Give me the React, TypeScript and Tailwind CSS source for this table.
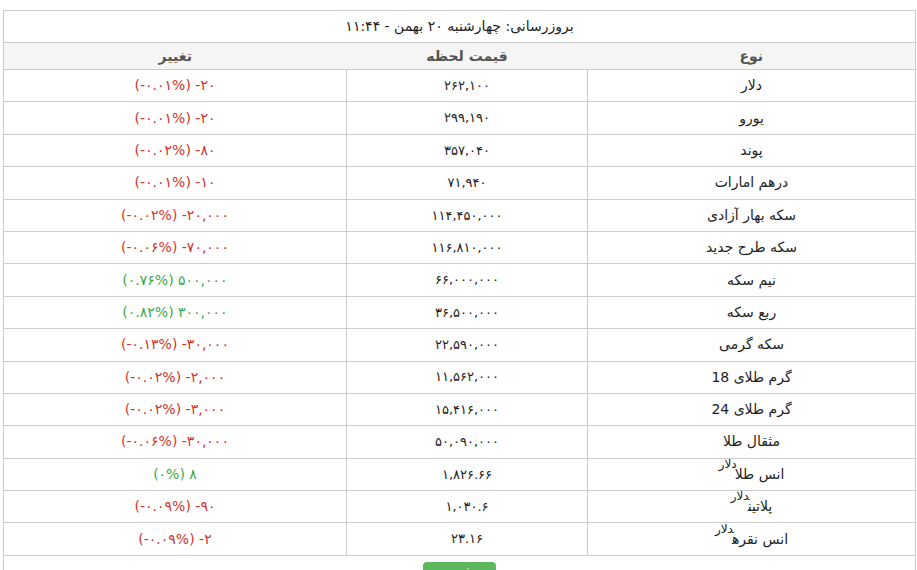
import React from 'react';

type Row = {
  name: string;
  unit?: string;
  price: string;
  amount: string;
  percent: string;
  up?: boolean;
};

const rows: Row[] = [
  { name: 'دلار', price: '۲۶۲,۱۰۰', amount: '-۲۰', percent: '(-۰.۰۱%)' },
  { name: 'یورو', price: '۲۹۹,۱۹۰', amount: '-۲۰', percent: '(-۰.۰۱%)' },
  { name: 'پوند', price: '۳۵۷,۰۴۰', amount: '-۸۰', percent: '(-۰.۰۲%)' },
  { name: 'درهم امارات', price: '۷۱,۹۴۰', amount: '-۱۰', percent: '(-۰.۰۱%)' },
  { name: 'سکه بهار آزادی', price: '۱۱۴,۴۵۰,۰۰۰', amount: '-۲۰,۰۰۰', percent: '(-۰.۰۲%)' },
  { name: 'سکه طرح جدید', price: '۱۱۶,۸۱۰,۰۰۰', amount: '-۷۰,۰۰۰', percent: '(-۰.۰۶%)' },
  { name: 'نیم سکه', price: '۶۶,۰۰۰,۰۰۰', amount: '۵۰۰,۰۰۰', percent: '(۰.۷۶%)', up: true },
  { name: 'ربع سکه', price: '۳۶,۵۰۰,۰۰۰', amount: '۳۰۰,۰۰۰', percent: '(۰.۸۲%)', up: true },
  { name: 'سکه گرمی', price: '۲۲,۵۹۰,۰۰۰', amount: '-۳۰,۰۰۰', percent: '(-۰.۱۳%)' },
  { name: 'گرم طلای 18', price: '۱۱,۵۶۲,۰۰۰', amount: '-۲,۰۰۰', percent: '(-۰.۰۲%)' },
  { name: 'گرم طلای 24', price: '۱۵,۴۱۶,۰۰۰', amount: '-۳,۰۰۰', percent: '(-۰.۰۲%)' },
  { name: 'مثقال طلا', price: '۵۰,۰۹۰,۰۰۰', amount: '-۳۰,۰۰۰', percent: '(-۰.۰۶%)' },
  { name: 'انس طلا', unit: 'دلار', price: '۱,۸۲۶.۶۶', amount: '۸', percent: '(۰%)', up: true },
  { name: 'پلاتین', unit: 'دلار', price: '۱,۰۳۰.۶', amount: '-۹۰', percent: '(-۰.۰۹%)' },
  { name: 'انس نقره', unit: 'دلار', price: '۲۳.۱۶', amount: '-۲', percent: '(-۰.۰۹%)' },
];

export default function App() {
  return (
    <div
      dir="rtl"
      className="min-h-screen bg-white pt-[10px] pl-[3px] pr-[1px] text-[14px] text-[#222]"
      style={{ fontFamily: '"DejaVu Sans", sans-serif' }}
    >
      <table dir="ltr" className="w-[913px] border-collapse border border-[#ccc]">
        <tbody>
          <tr>
            <td colSpan={3} dir="rtl" className="h-[32px] border-b border-[#ccc] text-center">
              بروزرسانی: چهارشنبه ۲۰ بهمن - ۱۱:۴۴
            </td>
          </tr>
          <tr className="bg-[#f5f5f5] font-bold text-[#555]">
            <td className="h-[27px] border-b border-[#ccc] text-center">تغییر</td>
            <td className="border-b border-[#ccc] text-center">قیمت لحظه</td>
            <td className="border-b border-[#ccc] text-center">نوع</td>
          </tr>
          {rows.map((r) => (
            <tr key={r.name} className="h-[32.4px]">
              <td className={`w-[343px] border border-[#ccc] text-center ${r.up ? 'text-[#3aa847]' : 'text-[#d2322d]'}`}>
                <span dir="ltr">{r.percent} {r.amount}</span>
              </td>
              <td className="w-[241px] border border-[#ccc] text-center text-[13px]">
                <span dir="ltr">{r.price}</span>
              </td>
              <td dir="rtl" className="border border-[#ccc] text-center">
                {r.name}
                {r.unit && (
                  <span className="relative -top-[11px] -mr-[2px] text-[12px] leading-none">{r.unit}</span>
                )}
              </td>
            </tr>
          ))}
          <tr>
            <td colSpan={3} className="h-[30px] pt-[5px] text-center align-top">
              <span className="inline-block h-[24px] w-[73px] rounded-[4px] bg-[#5cb85c] text-white text-[13px]">
                ثبت
              </span>
            </td>
          </tr>
        </tbody>
      </table>
    </div>
  );
}
